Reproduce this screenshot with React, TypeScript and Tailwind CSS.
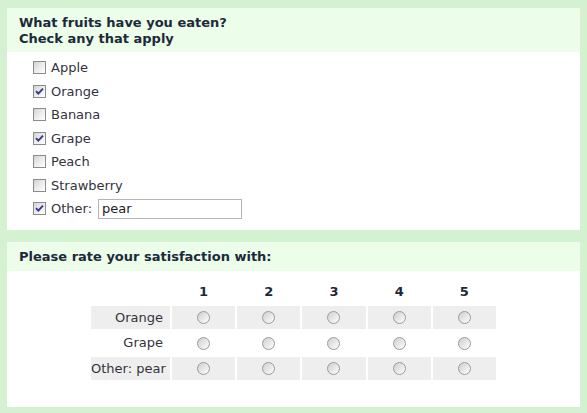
import React from 'react';

const fruits = [
  { name: 'Apple', checked: false },
  { name: 'Orange', checked: true },
  { name: 'Banana', checked: false },
  { name: 'Grape', checked: true },
  { name: 'Peach', checked: false },
  { name: 'Strawberry', checked: false },
];

const ratingRows = ['Orange', 'Grape', 'Other: pear'];

const CheckBox = ({ checked }: { checked: boolean }) => (
  <span className="w-[13px] h-[13px] shrink-0 border border-[#8c8c8c] bg-gradient-to-br from-[#d2d2d2] via-[#ececec] to-white flex items-center justify-center">
    {checked && (
      <svg width="9" height="9" viewBox="0 0 9 9">
        <path d="M1 4.2 L3.3 6.6 L8 1.6" fill="none" stroke="#34398a" strokeWidth="1.9" />
      </svg>
    )}
  </span>
);

const Radio = () => (
  <span className="inline-block w-[13px] h-[13px] rounded-full border border-[#9a9a9a] bg-gradient-to-br from-[#cfcfcf] via-[#e6e6e6] to-white align-middle" />
);

export default function App() {
  return (
    <div
      className="min-h-screen bg-[#d4f1d2] px-[7px] pt-[8px] pb-[5px] flex flex-col gap-[12px] text-[13px] text-[#333340]"
      style={{ fontFamily: 'Verdana, "DejaVu Sans", sans-serif' }}
    >
      <section className="bg-white">
        <div className="bg-[#ecfdea] px-[12px] pt-[7px] pb-[5px] font-bold leading-[16px] text-[#1b2a3a]">
          <div>What fruits have you eaten?</div>
          <div>Check any that apply</div>
        </div>
        <div className="pl-[26px] pt-[4px] pb-[9px]">
          {fruits.map((f) => (
            <label key={f.name} className="flex items-center gap-[5px] h-[23.5px]">
              <CheckBox checked={f.checked} />
              <span>{f.name}</span>
            </label>
          ))}
          <label className="flex items-center gap-[5px] h-[23.5px]">
            <CheckBox checked />
            <span>Other:</span>
            <span className="ml-[1px] w-[144px] h-[20px] border border-[#b4b4b4] flex items-center px-[3px] text-[#222]">
              pear
            </span>
          </label>
        </div>
      </section>

      <section className="bg-white">
        <div className="bg-[#ecfdea] px-[12px] h-[29px] pt-[1px] flex items-center font-bold text-[#1b2a3a]">
          Please rate your satisfaction with:
        </div>
        <div className="flex justify-center pt-[8px] pb-[25px]">
          <table className="table-fixed border-separate border-spacing-[2px] w-[409px]">
            <colgroup>
              <col className="w-[79px]" />
              <col />
              <col />
              <col />
              <col />
              <col />
            </colgroup>
            <thead>
              <tr className="h-[23px]">
                <th />
                {[1, 2, 3, 4, 5].map((n) => (
                  <th key={n} className="text-center font-bold text-[#1b2a3a]">
                    {n}
                  </th>
                ))}
              </tr>
            </thead>
            <tbody>
              {ratingRows.map((r, i) => (
                <tr key={r} className="h-[23.5px]">
                  <td className={`text-right pr-[7px] whitespace-nowrap ${i % 2 === 0 ? 'bg-[#eeeeee]' : ''}`}>{r}</td>
                  {[1, 2, 3, 4, 5].map((n) => (
                    <td key={n} className={`text-center leading-none ${i % 2 === 0 ? 'bg-[#eeeeee]' : ''}`}>
                      <Radio />
                    </td>
                  ))}
                </tr>
              ))}
            </tbody>
          </table>
        </div>
      </section>
    </div>
  );
}
